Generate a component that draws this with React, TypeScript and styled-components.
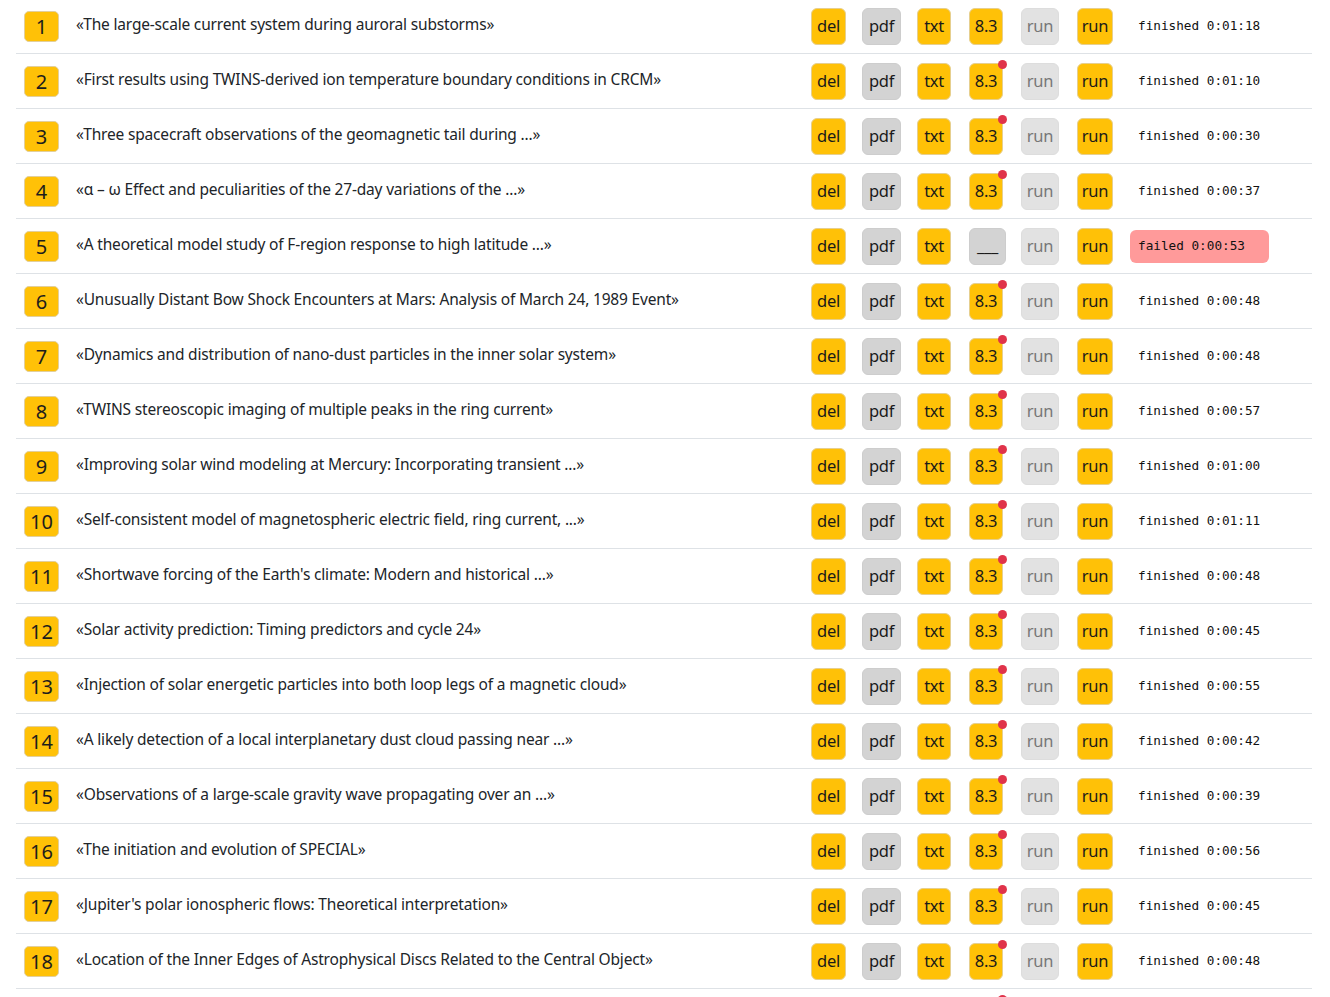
import React from "react";
import styled, { createGlobalStyle } from "styled-components";

const Global = createGlobalStyle`
  html, body { margin: 0; padding: 0; background: #fff; }
  body { font-family: "Noto Sans", "Open Sans", sans-serif; color: #212529; overflow: hidden; }
`;

type Item = {
  title: string;
  time: string;
  failed?: boolean;
  version?: string;
  dot?: boolean;
};

const items: Item[] = [
  { title: "«The large-scale current system during auroral substorms»", time: "0:01:18", version: "8.3", dot: false },
  { title: "«First results using TWINS-derived ion temperature boundary conditions in CRCM»", time: "0:01:10", version: "8.3", dot: true },
  { title: "«Three spacecraft observations of the geomagnetic tail during ...»", time: "0:00:30", version: "8.3", dot: true },
  { title: "«α – ω Effect and peculiarities of the 27-day variations of the ...»", time: "0:00:37", version: "8.3", dot: true },
  { title: "«A theoretical model study of F-region response to high latitude ...»", time: "0:00:53", failed: true },
  { title: "«Unusually Distant Bow Shock Encounters at Mars: Analysis of March 24, 1989 Event»", time: "0:00:48", version: "8.3", dot: true },
  { title: "«Dynamics and distribution of nano-dust particles in the inner solar system»", time: "0:00:48", version: "8.3", dot: true },
  { title: "«TWINS stereoscopic imaging of multiple peaks in the ring current»", time: "0:00:57", version: "8.3", dot: true },
  { title: "«Improving solar wind modeling at Mercury: Incorporating transient ...»", time: "0:01:00", version: "8.3", dot: true },
  { title: "«Self-consistent model of magnetospheric electric field, ring current, ...»", time: "0:01:11", version: "8.3", dot: true },
  { title: "«Shortwave forcing of the Earth's climate: Modern and historical ...»", time: "0:00:48", version: "8.3", dot: true },
  { title: "«Solar activity prediction: Timing predictors and cycle 24»", time: "0:00:45", version: "8.3", dot: true },
  { title: "«Injection of solar energetic particles into both loop legs of a magnetic cloud»", time: "0:00:55", version: "8.3", dot: true },
  { title: "«A likely detection of a local interplanetary dust cloud passing near ...»", time: "0:00:42", version: "8.3", dot: true },
  { title: "«Observations of a large-scale gravity wave propagating over an ...»", time: "0:00:39", version: "8.3", dot: true },
  { title: "«The initiation and evolution of SPECIAL»", time: "0:00:56", version: "8.3", dot: true },
  { title: "«Jupiter's polar ionospheric flows: Theoretical interpretation»", time: "0:00:45", version: "8.3", dot: true },
  { title: "«Location of the Inner Edges of Astrophysical Discs Related to the Central Object»", time: "0:00:48", version: "8.3", dot: true },
  { title: "«Magnetic reconnection in the near-Earth magnetotail»", time: "0:00:51", version: "8.3", dot: true },
];

const Table = styled.div`
  width: 1296px;
  margin: -1px 0 0 16px;
  display: flex;
  flex-direction: column;
`;

const Row = styled.div`
  display: grid;
  grid-template-columns: 52px 1fr 51px 55px 52px 52px 56px 53px 182px;
  align-items: center;
  height: 54px;
  padding-left: 8px;
  border-bottom: 1px solid #dee2e6;
`;

const Num = styled.div`
  width: 35px;
  height: 31px;
  box-sizing: border-box;
  background: #ffc107;
  border: 1px solid #e2cf9c;
  border-radius: 5px;
  display: flex;
  align-items: center;
  justify-content: center;
  font-size: 20px;
  color: #1d1d1d;
`;

const Title = styled.div`
  font-size: 15.5px;
  color: #212529;
  white-space: nowrap;
  overflow: hidden;
  padding-bottom: 4px;
  letter-spacing: -0.18px;
`;

type Tone = "yellow" | "gray" | "light";

const Btn = styled.div<{ $tone: Tone; $w: number; $dot?: boolean }>`
  position: relative;
  box-sizing: border-box;
  width: ${(p) => p.$w}px;
  height: 37px;
  border-radius: 6px;
  border: 1px solid
    ${(p) => (p.$tone === "yellow" ? "#e6cf8f" : p.$tone === "gray" ? "#cdcdcd" : "#dddddd")};
  background: ${(p) => (p.$tone === "yellow" ? "#ffc107" : p.$tone === "gray" ? "#d3d3d3" : "#e2e2e2")};
  color: ${(p) => (p.$tone === "light" ? "#777" : "#1a1a1a")};
  display: flex;
  align-items: center;
  justify-content: center;
  font-size: 16.5px;
  letter-spacing: -0.3px;
  padding-bottom: 2px;
  &::after {
    content: "";
    display: ${(p) => (p.$dot ? "block" : "none")};
    position: absolute;
    top: -4px;
    right: -5px;
    width: 9px;
    height: 9px;
    border-radius: 50%;
    background: #e0334a;
  }
`;

const Status = styled.div<{ $failed?: boolean }>`
  justify-self: start;
  box-sizing: border-box;
  width: ${(p) => (p.$failed ? "139px" : "auto")};
  height: 33px;
  display: flex;
  align-items: center;
  padding: 0 0 2px 8px;
  border-radius: 6px;
  background: ${(p) => (p.$failed ? "#ff9a9a" : "transparent")};
  font-family: "DejaVu Sans Mono", "Liberation Mono", monospace;
  font-size: 12.7px;
  color: #111;
`;

export default function App() {
  return (
    <>
      <Global />
      <Table>
        {items.map((it, i) => (
          <Row key={i}>
            <Num>{i + 1}</Num>
            <Title>{it.title}</Title>
            <Btn $tone="yellow" $w={35}>del</Btn>
            <Btn $tone="gray" $w={39}>pdf</Btn>
            <Btn $tone="yellow" $w={34}>txt</Btn>
            {it.failed ? (
              <Btn $tone="gray" $w={37}>___</Btn>
            ) : (
              <Btn $tone="yellow" $w={34} $dot={it.dot}>{it.version}</Btn>
            )}
            <Btn $tone="light" $w={38}>run</Btn>
            <Btn $tone="yellow" $w={36}>run</Btn>
            <Status $failed={it.failed}>
              {it.failed ? "failed" : "finished"} {it.time}
            </Status>
          </Row>
        ))}
      </Table>
    </>
  );
}
